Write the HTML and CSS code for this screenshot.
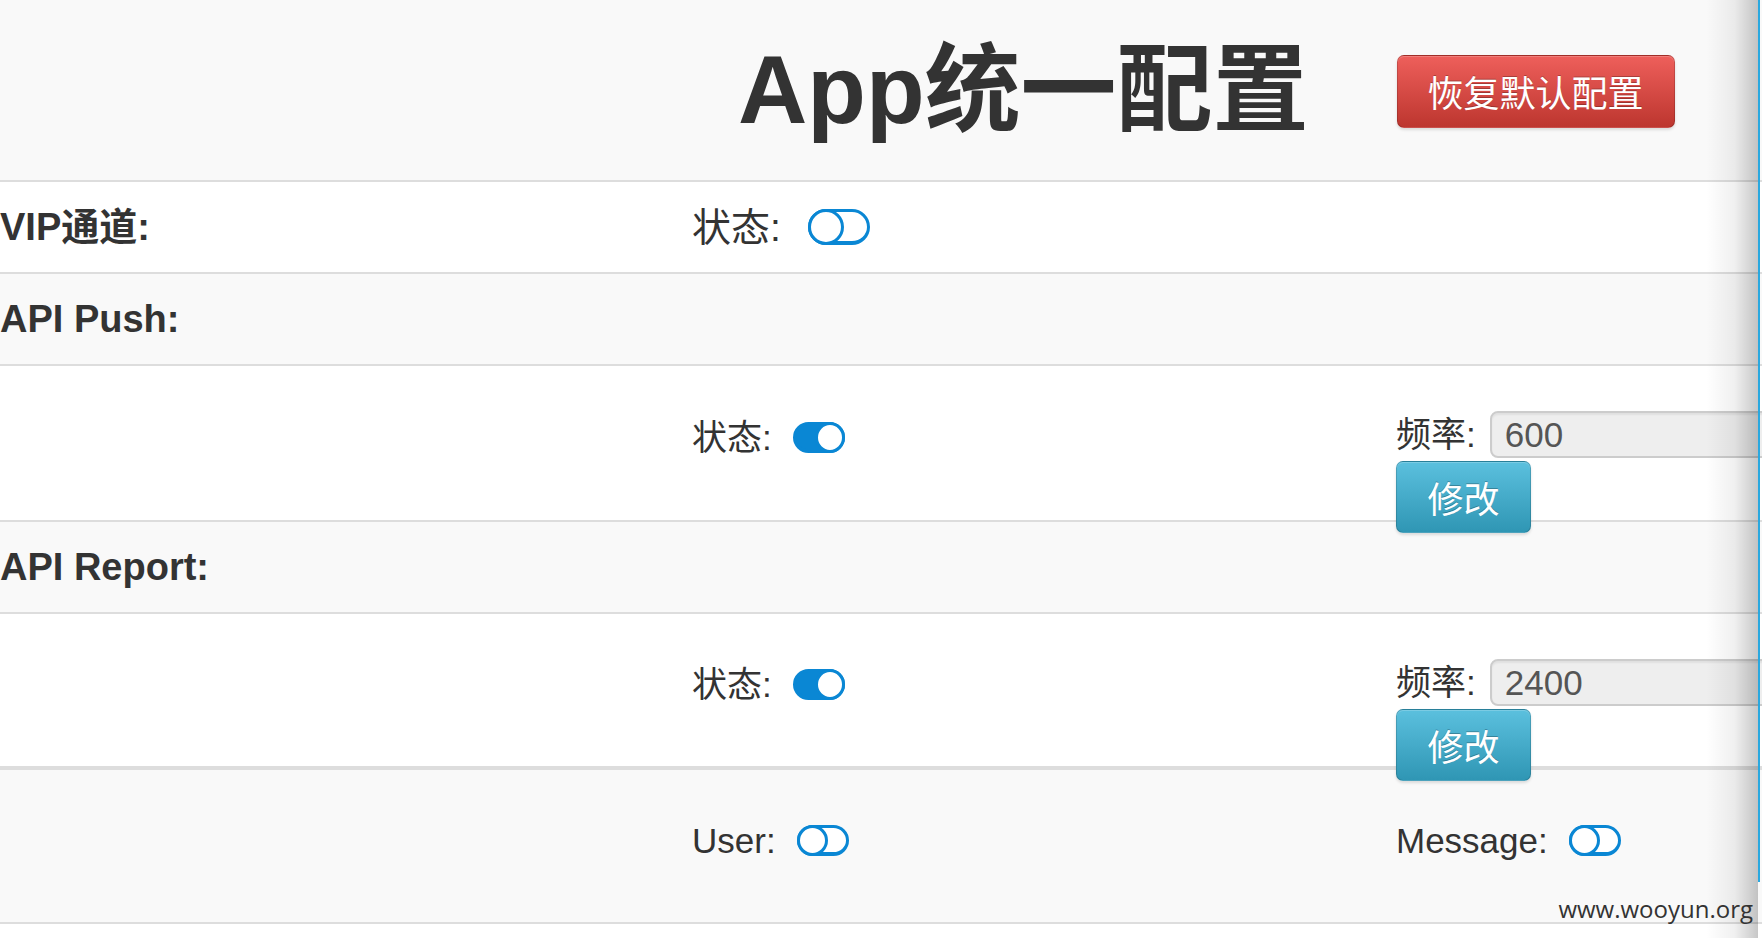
FILE: index.html
```html
<!DOCTYPE html>
<html lang="zh-CN">
<head>
<meta charset="utf-8">
<title>App统一配置</title>
<link rel="stylesheet" href="styles.css">
</head>
<body>
<div class="page">
  <header class="header">
    <h1 class="title">App统一配置</h1>
    <button class="btn btn-danger">恢复默认配置</button>
  </header>

  <div class="row row-short">
    <div class="label">VIP通道:</div>
    <div class="field field-lg"><span>状态:</span><span class="toggle toggle-lg"></span></div>
    <div></div>
  </div>

  <div class="row row-short striped">
    <div class="label">API Push:</div>
  </div>

  <div class="row row-tall">
    <div></div>
    <div class="field field-up"><span>状态:</span><span class="toggle on"></span></div>
    <div class="rate">
      <div class="rate-line"><span>频率:</span><input class="rate-input" type="text" value="600"></div>
      <button class="btn btn-info">修改</button>
    </div>
  </div>

  <div class="row row-short striped">
    <div class="label">API Report:</div>
  </div>

  <div class="row row-tall row-tall-b">
    <div></div>
    <div class="field field-up"><span>状态:</span><span class="toggle on"></span></div>
    <div class="rate">
      <div class="rate-line"><span>频率:</span><input class="rate-input" type="text" value="2400"></div>
      <button class="btn btn-info">修改</button>
    </div>
  </div>

  <div class="row row-tall striped row-thick row-last">
    <div></div>
    <div class="field field-up"><span>User:</span><span class="toggle"></span></div>
    <div class="field field-up"><span>Message:</span><span class="toggle"></span></div>
  </div>

  <div class="edge-shadow"></div>
  <div class="edge-line"></div>
  <div class="watermark">www.wooyun.org</div>
</div>
</body>
</html>
```

FILE: styles.css
```css
html, body {
  margin: 0;
  padding: 0;
  background: #ffffff;
}

body {
  font-family: "Liberation Sans", Arial, "Noto Sans CJK SC", sans-serif;
  color: #333333;
}

.page {
  position: relative;
  width: 1762px;
  height: 938px;
  overflow: hidden;
  background: #ffffff;
}

/* header */
.header {
  height: 180px;
  background: #f9f9f9;
  display: flex;
  align-items: center;
}

.title {
  margin: 0 0 0 738px;
  font-size: 96px;
  line-height: 1;
  font-weight: bold;
  color: #333333;
  font-family: "Liberation Sans", Arial, "Noto Sans CJK SC", sans-serif;
}

.btn {
  font-family: "Noto Sans CJK SC", "Liberation Sans", sans-serif;
  font-size: 36px;
  line-height: 1;
  color: #ffffff;
  border: 1px solid rgba(0, 0, 0, 0.15);
  border-radius: 7px;
  padding: 0 30px;
  white-space: nowrap;
  text-shadow: 0 -1px 0 rgba(0, 0, 0, 0.25);
  box-shadow: inset 0 1px 0 rgba(255, 255, 255, 0.2), 0 2px 3px rgba(0, 0, 0, 0.12);
  cursor: pointer;
  position: relative;
  z-index: 1;
  flex: none;
}

.btn-danger {
  margin-left: 88px;
  margin-top: 2px;
  height: 73px;
  min-width: 278px;
  background: linear-gradient(to bottom, #ee5f5b, #bd362f);
}

.btn-info {
  height: 72px;
  min-width: 135px;
  background: linear-gradient(to bottom, #5bc0de, #2f96b4);
}

/* rows */
.row {
  display: grid;
  grid-template-columns: 692px 704px 1fr;
  grid-template-rows: minmax(0, 1fr);
  border-top: 2px solid #dddddd;
  background: #ffffff;
}

.row.striped {
  background: #f9f9f9;
}

.row-short {
  height: 90px;
  align-items: center;
}

.row-tall {
  height: 154px;
}

.row-tall-b {
  height: 152px;
}

.row-thick {
  border-top-width: 4px;
  height: 152px;
}

.row-last {
  border-bottom: 2px solid #dddddd;
}

.label {
  font-size: 38px;
  font-weight: bold;
  line-height: 1;
  white-space: nowrap;
}

.field {
  display: flex;
  align-items: center;
  font-size: 35px;
  line-height: 1;
  gap: 21px;
  white-space: nowrap;
}

.field-lg {
  font-size: 39px;
  gap: 27px;
}

.field-up {
  align-self: center;
  margin-bottom: 11px;
}

/* toggle switch */
.toggle {
  position: relative;
  display: inline-block;
  box-sizing: border-box;
  width: 52px;
  height: 31px;
  border: 3px solid #0a87d4;
  border-bottom-width: 4px;
  border-radius: 999px;
  background: #ffffff;
  flex: none;
}

.toggle::after {
  content: "";
  position: absolute;
  top: -3px;
  left: -3px;
  width: 31px;
  height: 31px;
  box-sizing: border-box;
  border: 3px solid #0a87d4;
  border-radius: 50%;
  background: #ffffff;
}

.toggle.on {
  background: #0a87d4;
}

.toggle.on::after {
  left: auto;
  right: -3px;
  width: 30px;
}

.toggle-lg {
  width: 62px;
  height: 36px;
}

.toggle-lg::after {
  width: 36px;
  height: 36px;
}

/* rate column */
.rate {
  display: flex;
  flex-direction: column;
  align-items: flex-start;
  padding-top: 45px;
  gap: 3px;
  min-height: 0;
}

.rate > * {
  flex: none;
}

.rate-line {
  display: flex;
  align-items: center;
  gap: 14px;
  font-size: 35px;
  line-height: 1;
  white-space: nowrap;
}

.rate-input {
  box-sizing: border-box;
  width: 420px;
  height: 47px;
  border: 2px solid #cccccc;
  border-radius: 8px;
  background: #eeeeee;
  box-shadow: inset 0 2px 2px rgba(0, 0, 0, 0.06);
  padding: 0 13px;
  font-family: "Liberation Sans", Arial, sans-serif;
  font-size: 35px;
  color: #555555;
  outline: none;
}

/* overlays */
.edge-shadow {
  position: absolute;
  top: 0;
  right: 4px;
  width: 52px;
  height: 938px;
  background: linear-gradient(to right, rgba(0, 0, 0, 0), rgba(0, 0, 0, 0.06) 55%, rgba(0, 0, 0, 0.22));
  pointer-events: none;
}

.edge-line {
  position: absolute;
  top: 0;
  left: 1758px;
  width: 2px;
  height: 882px;
  background: #2aa8df;
}

.watermark {
  position: absolute;
  top: 895px;
  right: 9px;
  font-family: "Open Sans", "Noto Sans", sans-serif;
  font-size: 24px;
  line-height: 28px;
  color: #333333;
}
```
